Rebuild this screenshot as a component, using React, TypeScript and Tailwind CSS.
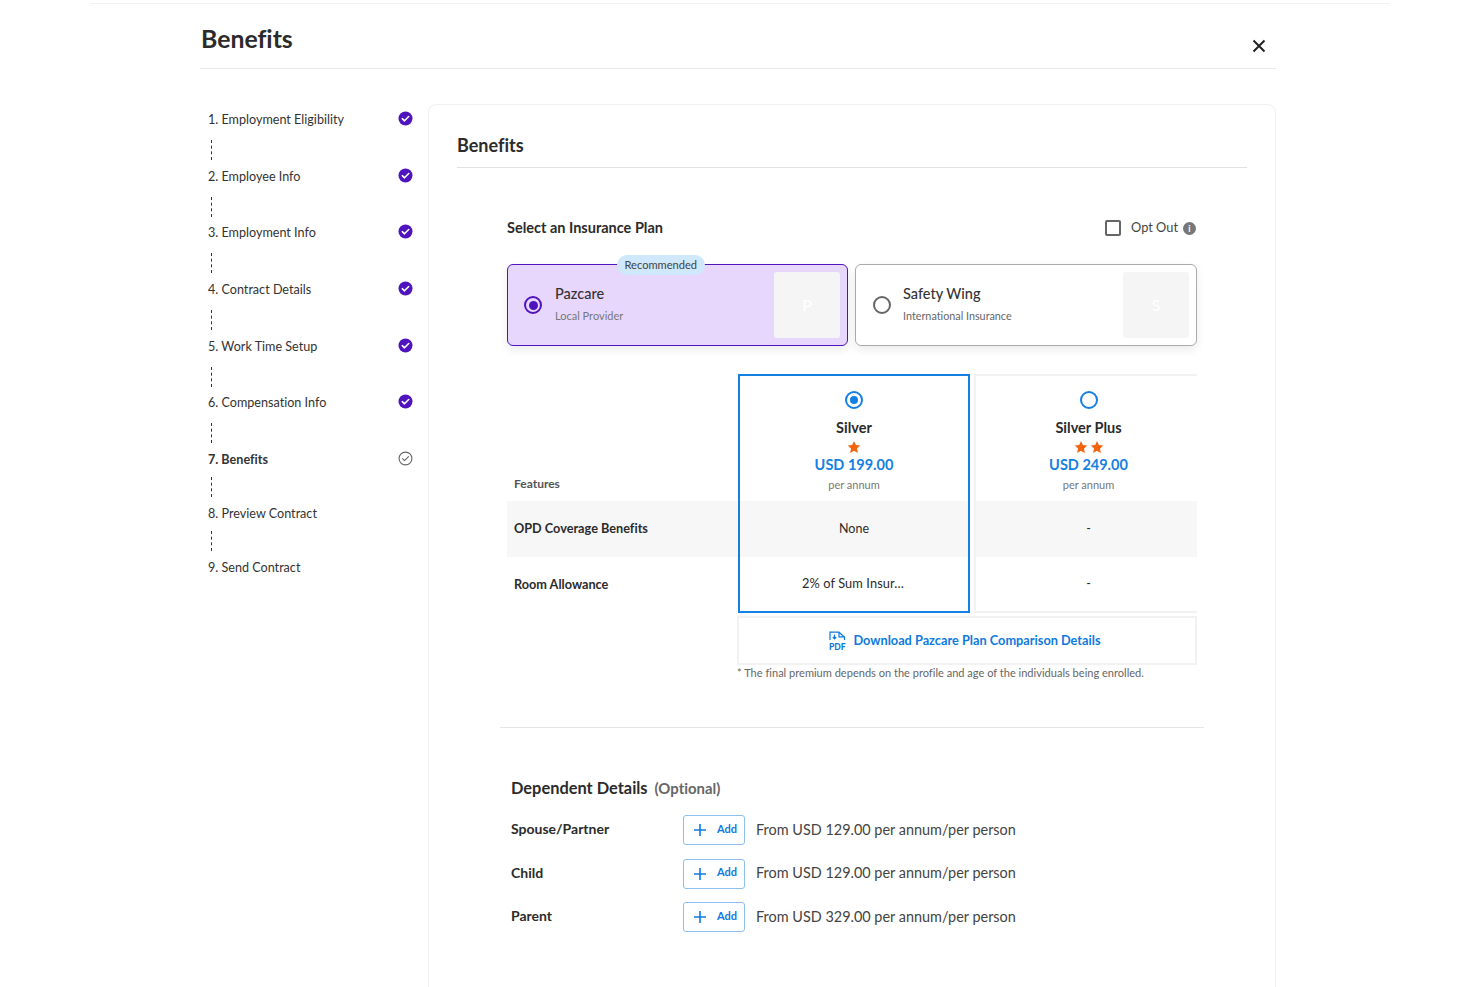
const steps = [
  { label: "1. Employment Eligibility", gap: "mt-[12px] mb-[7px]", done: true },
  { label: "2. Employee Info", gap: "mt-[12px] mb-[6px]", done: true },
  { label: "3. Employment Info", gap: "mt-[12px] mb-[7px]", done: true },
  { label: "4. Contract Details", gap: "mt-[12px] mb-[7px]", done: true },
  { label: "5. Work Time Setup", gap: "mt-[12px] mb-[6px]", done: true },
  { label: "6. Compensation Info", gap: "mt-[12px] mb-[7px]", done: true },
  { label: "7. Benefits", gap: "mt-[9px] mb-[7px]", active: true },
  { label: "8. Preview Contract", gap: "mt-[9px] mb-[7px]" },
  { label: "9. Send Contract" },
];

const dependents = [
  { name: "Spouse/Partner", price: "From USD 129.00 per annum/per person" },
  { name: "Child", price: "From USD 129.00 per annum/per person" },
  { name: "Parent", price: "From USD 329.00 per annum/per person" },
];

function DoneIcon() {
  return (
    <svg width="15" height="15" viewBox="0 0 15 15">
      <circle cx="7.5" cy="7.5" r="7" fill="#4f14bd" />
      <path d="M4.3 7.7l2.2 2.1 4.2-4.3" fill="none" stroke="#fff" strokeWidth="1.6" strokeLinecap="round" strokeLinejoin="round" />
    </svg>
  );
}

function ActiveIcon() {
  return (
    <svg width="15" height="15" viewBox="0 0 15 15">
      <circle cx="7.5" cy="7.5" r="6.4" fill="none" stroke="#666" strokeWidth="1.1" />
      <path d="M4.6 7.7l2 2 3.9-4.1" fill="none" stroke="#666" strokeWidth="1.1" strokeLinecap="round" strokeLinejoin="round" />
    </svg>
  );
}

function Star() {
  return (
    <svg width="14" height="14" viewBox="0 0 24 24" fill="#f4640c">
      <path d="M12 1.5l3.2 7.1 7.6.8-5.7 5.2 1.6 7.6L12 18.4l-6.7 3.8 1.6-7.6L1.2 9.4l7.6-.8z" />
    </svg>
  );
}

function PdfIcon() {
  return (
    <svg width="17" height="19" viewBox="0 0 17 19" fill="none" stroke="#0e7ae0">
      <path d="M1 9V1.2h9l5.5 5V9" strokeWidth="1.2" />
      <path d="M10 1.5v4.4h5.5" strokeWidth="1.2" />
      <path d="M5.5 3.5v4M3.8 6l1.7 1.8L7.2 6" strokeWidth="1.2" />
      <text x="0" y="18.5" fontSize="8.5" fontWeight="900" fill="#0e7ae0" stroke="none" fontFamily="Lato, sans-serif">PDF</text>
    </svg>
  );
}

export default function App() {
  return (
    <div className="h-[987px] overflow-hidden bg-white font-['Lato',sans-serif] text-[#2b2b2b] [font-variant-ligatures:none]">
      <div className="mx-[90px] h-[4px] border-b border-[#f2f2f2]" />

      <div className="mx-[200px] mr-[204px]">
        {/* header */}
        <div className="flex h-[65px] items-start justify-between border-b border-[#e9e9e9] pr-[10px]">
          <h1 className="ml-px mt-[18px] text-[24.8px] font-bold leading-[34px] text-[#2b2b2b]">Benefits</h1>
          <svg className="mt-[35px]" width="14" height="14" viewBox="0 0 14 14" stroke="#222" strokeWidth="2">
            <path d="M1.5 1.5l11 11M12.5 1.5l-11 11" />
          </svg>
        </div>

        <div className="mt-[35px] flex">
          {/* steps */}
          <div className="w-[228px] shrink-0 pl-[8px] pr-[15px] pt-[6px]">
            {steps.map((s) => (
              <div key={s.label}>
                <div className="flex h-[18px] items-center justify-between">
                  <span className={`pt-[2px] text-[12.6px] leading-[18px] text-[#333] ${s.active ? "font-bold" : ""}`}>{s.label}</span>
                  <span className="-mt-[2px] flex">
                    {s.done && <DoneIcon />}
                    {s.active && <ActiveIcon />}
                  </span>
                </div>
                {s.gap && (
                  <div className={`ml-[3px] h-[20px] w-0 border-l border-dashed border-[#333] ${s.gap}`} />
                )}
              </div>
            ))}
          </div>

          {/* main card */}
          <div className="h-[900px] w-[848px] shrink-0 rounded-[8px] border border-[#f0f0f0] px-[28px]">
            <h2 className="mt-[28px] text-[18px] font-bold leading-[24px]">Benefits</h2>
            <div className="mt-[10px] h-px bg-[#e2e2e2]" />

            <div className="mx-[50px] w-[690px]">
              <div className="mt-[50px] flex h-[20px] items-center justify-between">
                <span className="text-[14.5px] font-bold">Select an Insurance Plan</span>
                <div className="flex items-center">
                  <span className="h-[16px] w-[16px] rounded-[2px] border-2 border-[#666]" />
                  <span className="ml-[10px] text-[12.8px] text-[#444]">Opt Out</span>
                  <span className="ml-[5px] mr-px flex h-[13px] w-[13px] items-center justify-center rounded-full bg-[#777] text-[9px] font-bold leading-none text-white">i</span>
                </div>
              </div>

              {/* providers */}
              <div className="mt-[26px] flex justify-between">
                <div className="relative flex h-[82px] w-[341px] items-center rounded-[6px] border border-[#4f14bd] bg-[#e8d7fd] pl-[16px] pr-[7px] shadow-[0_4px_10px_rgba(0,0,0,0.08)]">
                  <span className="absolute left-[109px] top-[-10px] rounded-full bg-[#cfe8fb] px-[7.5px] text-[11.1px] leading-[20px] text-[#444]">Recommended</span>
                  <span className="flex h-[18px] w-[18px] items-center justify-center rounded-full border-2 border-[#4f14bd]">
                    <span className="h-[9px] w-[9px] rounded-full bg-[#4f14bd]" />
                  </span>
                  <div className="ml-[13px] flex-1 pb-[4px]">
                    <div className="text-[14.5px] font-medium leading-[20px] text-[#333]">Pazcare</div>
                    <div className="mt-[5px] text-[11px] leading-[14px] text-[#777]">Local Provider</div>
                  </div>
                  <div className="flex h-[66px] w-[66px] items-center justify-center rounded-[3px] bg-[#f5f5f5] text-[16px] text-white">P</div>
                </div>

                <div className="flex h-[82px] w-[342px] items-center rounded-[6px] border border-[#aaa] bg-white pl-[17px] pr-[7px] shadow-[0_4px_10px_rgba(0,0,0,0.08)]">
                  <span className="h-[18px] w-[18px] rounded-full border-2 border-[#666]" />
                  <div className="ml-[12px] flex-1 pb-[4px]">
                    <div className="text-[14.5px] font-medium leading-[20px] text-[#333]">Safety Wing</div>
                    <div className="mt-[5px] text-[10.8px] leading-[14px] text-[#666]">International Insurance</div>
                  </div>
                  <div className="flex h-[66px] w-[66px] items-center justify-center rounded-[3px] bg-[#f5f5f5] text-[16px] text-white">S</div>
                </div>
              </div>

              {/* plan table */}
              <div className="mt-[28px] flex">
                <div className="w-[231px] shrink-0">
                  <div className="flex h-[127px] items-end px-[7px] pb-[8px] text-[12px] font-bold text-[#555]">Features</div>
                  <div className="flex h-[56px] items-center bg-[#f7f7f7] px-[7px] text-[12.7px] font-bold">OPD Coverage Benefits</div>
                  <div className="flex h-[55px] items-center px-[7px] pt-px text-[12.7px] font-bold">Room Allowance</div>
                </div>

                <div className="h-[239px] w-[232px] shrink-0 border-2 border-[#1480e3]">
                  <div className="flex h-[125px] flex-col items-center pt-[15px]">
                    <span className="flex h-[18px] w-[18px] items-center justify-center rounded-full border-2 border-[#1480e3]">
                      <span className="h-[8px] w-[8px] rounded-full bg-[#1480e3]" />
                    </span>
                    <span className="mt-[9px] text-[14.5px] font-bold leading-[20px]">Silver</span>
                    <span className="mt-[2px] flex h-[14px] items-center"><Star /></span>
                    <span className="mt-[1px] text-[14.5px] font-bold leading-[20px] text-[#1480e3]">USD 199.00</span>
                    <span className="mt-[3px] text-[11px] leading-[14px] text-[#777]">per annum</span>
                  </div>
                  <div className="flex h-[56px] items-center justify-center bg-[#f7f7f7] text-[12.5px]">None</div>
                  <div className="flex h-[54px] items-center justify-center pr-[2px] text-[12.8px] tracking-[0.1px]">2% of Sum Insur…</div>
                </div>

                <div className="ml-[4px] h-[239px] w-[223px] shrink-0 border-y-2 border-l-2 border-[#f2f2f2]">
                  <div className="flex h-[125px] flex-col items-center pl-[4px] pt-[15px]">
                    <span className="h-[18px] w-[18px] rounded-full border-2 border-[#1480e3]" />
                    <span className="mt-[9px] text-[14.5px] font-bold leading-[20px]">Silver Plus</span>
                    <span className="mt-[2px] flex h-[14px] items-center gap-[2px]"><Star /><Star /></span>
                    <span className="mt-[1px] text-[14.5px] font-bold leading-[20px] text-[#1480e3]">USD 249.00</span>
                    <span className="mt-[3px] text-[11px] leading-[14px] text-[#777]">per annum</span>
                  </div>
                  <div className="flex h-[56px] items-center justify-center bg-[#f7f7f7] pl-[4px] text-[12.5px]">-</div>
                  <div className="flex h-[54px] items-center justify-center pl-[4px] text-[12.5px]">-</div>
                </div>
              </div>

              {/* download */}
              <div className="ml-[230px] mt-[3px] flex h-[49px] items-center justify-center gap-[7px] border-2 border-[#f2f2f2] pr-[4px]">
                <PdfIcon />
                <span className="text-[12.75px] font-bold text-[#0e7ae0]">Download Pazcare Plan Comparison Details</span>
              </div>
              <p className="ml-[230px] mt-[1px] text-[11.05px] leading-[14px] text-[#666]">* The final premium depends on the profile and age of the individuals being enrolled.</p>
            </div>

            <div className="mx-[43px] mt-[47px] h-px w-[704px] bg-[#e6e6e6]" />

            {/* dependents */}
            <div className="ml-[54px] mt-[49px]">
              <div className="flex items-baseline gap-[7px] leading-[22px]">
                <span className="text-[16.4px] font-bold">Dependent Details</span>
                <span className="text-[14.9px] font-bold text-[#666]">(Optional)</span>
              </div>
              <div className="mt-[16px] flex flex-col gap-[13.7px]">
                {dependents.map((d) => (
                  <div key={d.name} className="flex h-[30px] items-center">
                    <span className="w-[172px] shrink-0 pb-[3px] text-[14px] font-bold">{d.name}</span>
                    <span className="flex h-[30px] w-[62px] shrink-0 items-center rounded-[3px] border border-[#8cc0f0] pl-[9px]">
                      <svg width="14" height="14" viewBox="0 0 14 14" stroke="#0e7ae0" strokeWidth="1.6"><path d="M7 1v12M1 7h12" /></svg>
                      <span className="ml-[10px] pb-[2px] text-[11px] font-bold text-[#0e7ae0]">Add</span>
                    </span>
                    <span className="ml-[11px] pb-[1px] text-[14.45px] text-[#444]">{d.price}</span>
                  </div>
                ))}
              </div>
            </div>
          </div>
        </div>
      </div>
    </div>
  );
}
